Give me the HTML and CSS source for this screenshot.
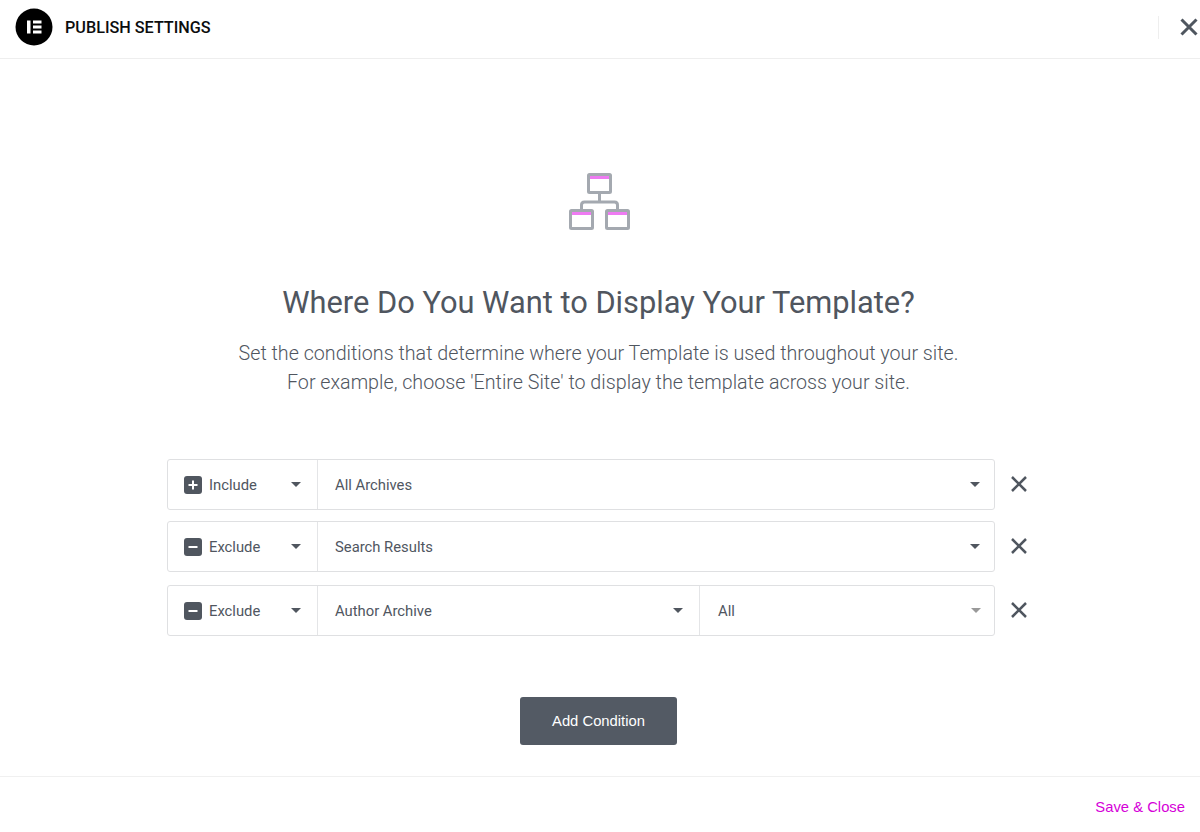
FILE: index.html
```html
<!DOCTYPE html>
<html lang="en">
<head>
  <meta charset="UTF-8" />
  <title>Publish Settings</title>
  <link rel="stylesheet" href="styles.css">
</head>
<body>
  <header class="header">
    <div class="logo">
      <svg width="38" height="38" viewBox="0 0 38 38"><circle cx="19" cy="19" r="18.5" fill="#000"/><rect x="12" y="12.500" width="3.500" height="13" fill="#fff"/><rect x="18" y="12.500" width="8.500" height="3" fill="#fff"/><rect x="18" y="17.500" width="8.500" height="3" fill="#fff"/><rect x="18" y="22.500" width="8.500" height="3" fill="#fff"/></svg>
    </div>
    <div class="header-title">PUBLISH SETTINGS</div>
    <div class="header-close">
      <svg width="18" height="18" viewBox="0 0 18 18"><path d="M1.500 1.500 L16.500 16.500 M16.500 1.500 L1.500 16.500" stroke="#4f565f" stroke-width="3" fill="none"/></svg>
    </div>
  </header>

  <main class="main">
    <svg class="hero-icon" width="64" height="60" viewBox="0 0 64 60">
      <g fill="#fff" stroke="#a4a9b0" stroke-width="3" stroke-linejoin="round">
        <rect x="21.500" y="3.500" width="22" height="18" rx="1"/>
        <rect x="3.500" y="39.500" width="22" height="18" rx="1"/>
        <rect x="39.500" y="39.500" width="22" height="18" rx="1"/>
      </g>
      <path d="M32.500 22 V31 M14.500 39 V34 Q14.500 31 17.500 31 H47.500 Q50.500 31 50.500 34 V39" fill="none" stroke="#a4a9b0" stroke-width="3"/>
      <rect x="23" y="5" width="19" height="3" fill="#ee7bf2"/>
      <rect x="5" y="41" width="19" height="3" fill="#ee7bf2"/>
      <rect x="41" y="41" width="19" height="3" fill="#ee7bf2"/>
    </svg>
    <h1 class="title">Where Do You Want to Display Your Template?</h1>
    <p class="intro">Set the conditions that determine where your Template is used throughout your site.<br>For example, choose 'Entire Site' to display the template across your site.</p>

    <div class="conditions">
      <div class="condition">
        <div class="box">
          <div class="cell cell-type">
            <span class="badge"><svg width="18" height="18" viewBox="0 0 18 18"><path d="M9 4.500 V13.500 M4.500 9 H13.500" stroke="#fff" stroke-width="2"/></svg></span>
            <span class="type-label">Include</span>
            <span class="caret"></span>
          </div>
          <div class="cell cell-main">All Archives<span class="caret"></span></div>
        </div>
        <svg class="remove" width="18" height="18" viewBox="0 0 18 18"><path d="M2 2 L16 16 M16 2 L2 16" stroke="#4f565f" stroke-width="2.500" fill="none"/></svg>
      </div>
      <div class="condition condition-tight">
        <div class="box">
          <div class="cell cell-type">
            <span class="badge"><svg width="18" height="18" viewBox="0 0 18 18"><path d="M4.500 9 H13.500" stroke="#fff" stroke-width="2"/></svg></span>
            <span class="type-label">Exclude</span>
            <span class="caret"></span>
          </div>
          <div class="cell cell-main">Search Results<span class="caret"></span></div>
        </div>
        <svg class="remove" width="18" height="18" viewBox="0 0 18 18"><path d="M2 2 L16 16 M16 2 L2 16" stroke="#4f565f" stroke-width="2.500" fill="none"/></svg>
      </div>
      <div class="condition">
        <div class="box">
          <div class="cell cell-type">
            <span class="badge"><svg width="18" height="18" viewBox="0 0 18 18"><path d="M4.500 9 H13.500" stroke="#fff" stroke-width="2"/></svg></span>
            <span class="type-label">Exclude</span>
            <span class="caret"></span>
          </div>
          <div class="cell cell-main cell-half">Author Archive<span class="caret"></span></div>
          <div class="cell cell-sub">All<span class="caret caret-light"></span></div>
        </div>
        <svg class="remove" width="18" height="18" viewBox="0 0 18 18"><path d="M2 2 L16 16 M16 2 L2 16" stroke="#4f565f" stroke-width="2.500" fill="none"/></svg>
      </div>
    </div>

    <button class="add-btn">Add Condition</button>
  </main>

  <footer class="footer">
    <a class="save-link">Save &amp; Close</a>
  </footer>
</body>
</html>
```

FILE: styles.css
```css
* {
  box-sizing: border-box;
}
body {
  margin: 0;
  height: 832px;
  background: #fff;
  color: #50565f;
  font-family: Roboto, Arial, sans-serif;
  display: flex;
  flex-direction: column;
  overflow: hidden;
}
.header {
  height: 59px;
  flex: none;
  display: flex;
  align-items: center;
  padding: 0 2px 4px 15px;
  border-bottom: 1px solid #eeeeee;
}
.logo {
  width: 38px;
  height: 38px;
}
.logo svg {
  display: block;
}
.header-title {
  margin-left: 12px;
  font-size: 16.2px;
  font-weight: 500;
  color: #0c0d0e;
}
.header-close {
  margin-left: auto;
  height: 23px;
  width: 40px;
  border-left: 1px solid #eeeeee;
  display: flex;
  align-items: center;
  justify-content: flex-end;
}
.main {
  flex: 1;
  display: flex;
  flex-direction: column;
  align-items: center;
  padding-top: 112px;
}
.hero-icon {
  display: block;
  margin-left: -3px;
}
.title {
  margin: 54px 3px 0 0;
  font-size: 30.8px;
  line-height: 36px;
  font-weight: 400;
  color: #50565f;
}
.intro {
  margin: 18px 3px 0 0;
  font-size: 19.7px;
  line-height: 29px;
  font-weight: 300;
  text-align: center;
  color: #50565f;
}
.conditions {
  margin-top: 62px;
  width: 870px;
  align-self: flex-start;
  margin-left: 167px;
}
.condition {
  display: flex;
  align-items: center;
  margin-bottom: 12px;
}
.condition-tight {
  margin-top: -1px;
  margin-bottom: 13px;
}
.box {
  width: 828px;
  height: 51px;
  flex: none;
  display: flex;
  border: 1px solid #dfe0e2;
  border-radius: 3px;
  font-size: 14.8px;
  color: #50565f;
}
.cell {
  display: flex;
  align-items: center;
  height: 100%;
}
.cell-type {
  width: 150px;
  flex: none;
  padding: 0 16px 0 16px;
  border-right: 1px solid #e4e5e7;
}
.badge {
  width: 18px;
  height: 18px;
  border-radius: 3px;
  background: #50565f;
  display: flex;
  align-items: center;
  justify-content: center;
  flex: none;
}
.type-label {
  margin-left: 7px;
}
.caret {
  margin-left: auto;
  width: 0;
  height: 0;
  border-left: 5px solid transparent;
  border-right: 5px solid transparent;
  border-top: 5px solid #50565f;
}
.caret-light {
  border-top-color: #999;
}
.cell-main {
  flex: 1;
  padding: 0 14px 0 17px;
}
.cell-half {
  flex: none;
  width: 382px;
  padding-right: 16px;
  border-right: 1px solid #e4e5e7;
}
.cell-sub {
  flex: 1;
  padding: 0 13px 0 18px;
}
.remove {
  margin-left: 15px;
  margin-top: -2px;
  flex: none;
}
.add-btn {
  margin-top: 49px;
  margin-left: -3px;
  width: 157px;
  height: 48px;
  border: none;
  border-radius: 3px;
  background: #535a64;
  color: #fff;
  font-family: "Liberation Sans", Arial, sans-serif;
  font-size: 14.8px;
}
.footer {
  height: 56px;
  flex: none;
  border-top: 1px solid #f0f0f0;
  display: flex;
  justify-content: flex-end;
  align-items: center;
  padding: 4px 15px 0 0;
}
.save-link {
  font-family: "Liberation Sans", Arial, sans-serif;
  font-size: 14.8px;
  color: #d500d8;
}
```
